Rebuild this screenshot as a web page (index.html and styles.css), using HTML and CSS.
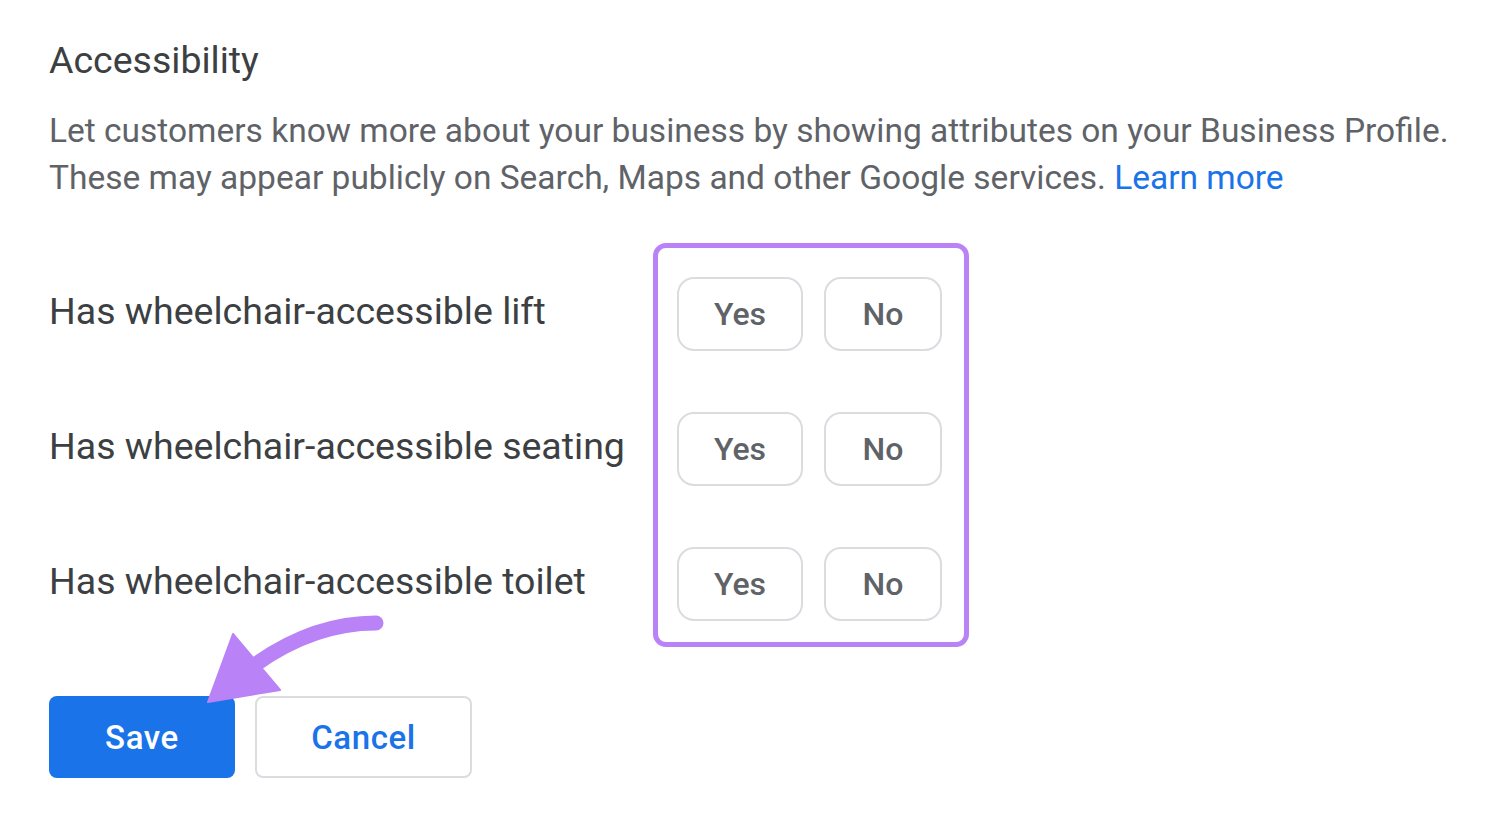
FILE: index.html
```html
<!DOCTYPE html>
<html lang="en">
<head>
<meta charset="utf-8">
<title>Accessibility</title>
<link rel="stylesheet" href="styles.css">
</head>
<body>
<main class="page">
  <h1 class="title">Accessibility</h1>
  <p class="desc">Let customers know more about your business by showing attributes on your Business Profile.<br>These may appear publicly on Search, Maps and other Google services. <a class="link" href="#">Learn more</a></p>

  <section class="attrs">
    <div class="labels">
      <div class="label">Has wheelchair-accessible lift</div>
      <div class="label">Has wheelchair-accessible seating</div>
      <div class="label">Has wheelchair-accessible toilet</div>
    </div>
    <div class="choices">
      <div class="pair"><button class="chip chip-yes">Yes</button><button class="chip chip-no">No</button></div>
      <div class="pair"><button class="chip chip-yes">Yes</button><button class="chip chip-no">No</button></div>
      <div class="pair"><button class="chip chip-yes">Yes</button><button class="chip chip-no">No</button></div>
    </div>
  </section>

  <div class="actions">
    <button class="btn btn-save">Save</button>
    <button class="btn btn-cancel">Cancel</button>
  </div>
</main>

<svg class="arrow" width="1490" height="822" viewBox="0 0 1490 822" aria-hidden="true">
  <path d="M376 623 C 330 623, 290 640, 256 664" fill="none" stroke="#b982f6" stroke-width="15" stroke-linecap="round"/>
  <polygon points="208,702 233,634 280,690" fill="#b982f6" stroke="#b982f6" stroke-width="2" stroke-linejoin="round"/>
</svg>
</body>
</html>
```

FILE: styles.css
```css
html, body {
  margin: 0;
  padding: 0;
  background: #ffffff;
}

body {
  font-family: Roboto, "Liberation Sans", Arial, sans-serif;
  position: relative;
  width: 1490px;
  height: 822px;
  overflow: hidden;
}

.page {
  padding: 40px 0 0 49px;
}

.title {
  margin: 0;
  font-size: 37.5px;
  line-height: 40px;
  font-weight: 400;
  color: #3c4043;
}

.desc {
  margin: 27px 0 0;
  font-size: 33.5px;
  line-height: 47px;
  color: #5f6368;
  white-space: nowrap;
}

.link {
  color: #1a73e8;
  text-decoration: none;
}

.attrs {
  display: flex;
  align-items: flex-start;
  margin-top: 42px;
}

.labels {
  width: 604px;
  display: flex;
  flex-direction: column;
  gap: 61px;
  padding-top: 34px;
}

.label {
  height: 74px;
  line-height: 68px;
  font-size: 37.5px;
  color: #3c4043;
  white-space: nowrap;
}

.choices {
  border: 5px solid #b982f6;
  border-radius: 13px;
  padding: 29px 22px 21px 19px;
  display: flex;
  flex-direction: column;
  gap: 61px;
}

.pair {
  display: flex;
  gap: 21px;
}

.chip {
  height: 74px;
  box-sizing: border-box;
  border: 2px solid #dadce0;
  border-radius: 17px;
  background: #ffffff;
  font-family: Roboto, "Liberation Sans", Arial, sans-serif;
  font-size: 32px;
  font-weight: 500;
  color: #5f6368;
  padding: 0;
  cursor: pointer;
}

.chip-yes { width: 126px; }
.chip-no { width: 118px; }

.actions {
  display: flex;
  gap: 20px;
  margin-top: 49px;
}

.btn {
  height: 82px;
  box-sizing: border-box;
  border-radius: 8px;
  font-family: Roboto, "Liberation Sans", Arial, sans-serif;
  font-size: 33px;
  font-weight: 500;
  letter-spacing: 0.6px;
  padding: 0;
  cursor: pointer;
}

.btn-save {
  width: 186px;
  background: #1a73e8;
  border: none;
  color: #ffffff;
}

.btn-cancel {
  width: 217px;
  background: #ffffff;
  border: 2px solid #dadce0;
  color: #1a73e8;
}

.arrow {
  position: absolute;
  left: 0;
  top: 0;
  pointer-events: none;
}
```
